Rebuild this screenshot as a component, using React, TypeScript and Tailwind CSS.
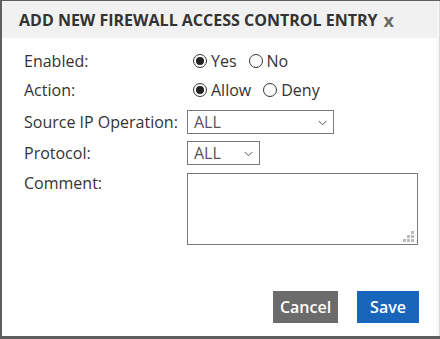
import { useState } from 'react'

function Radio({ checked, label, onClick }: { checked: boolean; label: string; onClick: () => void }) {
  return (
    <label className="flex cursor-pointer items-center" onClick={onClick}>
      <span className="flex h-[14px] w-[14px] items-center justify-center rounded-full border border-[#333] bg-white">
        {checked && <span className="h-[8px] w-[8px] rounded-full bg-[#222]" />}
      </span>
      <span className="ml-[4px]">{label}</span>
    </label>
  )
}

function Select({ width, value }: { width: string; value: string }) {
  return (
    <div className={`flex h-6 items-center justify-between border border-[#7a7a7a] bg-white pl-[6px] pr-[6px] ${width}`}>
      <span className="text-[#555]">{value}</span>
      <svg width="9" height="6" viewBox="0 0 9 6" className="mt-[1px]">
        <path d="M0.5 0.8 L4.5 4.8 L8.5 0.8" fill="none" stroke="#555" strokeWidth="1" />
      </svg>
    </div>
  )
}

export default function App() {
  const [enabled, setEnabled] = useState(true)
  const [allow, setAllow] = useState(true)

  return (
    <div
      className="flex h-[339px] w-[440px] flex-col bg-[#5e5e5e] pb-[3px] pl-[2px] pt-[1px]"
      style={{ fontFamily: '"Open Sans", sans-serif' }}
    >
      <div className="flex flex-1 border-r border-[#dcdcdc] bg-[#f6f6f6] pr-[2px]">
        <div className="flex flex-1 flex-col bg-white">
          <div className="flex h-[37px] items-center justify-between bg-[#f1f1f1] pl-[17px] pr-[43px]">
            <h1 className="text-[16px] font-bold text-[#333]">ADD NEW FIREWALL ACCESS CONTROL ENTRY</h1>
            <button className="text-[18px] font-bold leading-none text-[#6a6a6a]">x</button>
          </div>

          <div className="flex flex-1 flex-col pl-[22px] pr-[18px] pt-[11px] text-[16px] text-[#333]">
            <div className="flex h-6 items-center">
              <span className="w-[169px]">Enabled:</span>
              <div className="flex items-center gap-[12px]">
                <Radio checked={enabled} label="Yes" onClick={() => setEnabled(true)} />
                <Radio checked={!enabled} label="No" onClick={() => setEnabled(false)} />
              </div>
            </div>

            <div className="mt-[5px] flex h-6 items-center">
              <span className="w-[169px]">Action:</span>
              <div className="flex items-center gap-[12px]">
                <Radio checked={allow} label="Allow" onClick={() => setAllow(true)} />
                <Radio checked={!allow} label="Deny" onClick={() => setAllow(false)} />
              </div>
            </div>

            <div className="mt-[8px] flex h-6 items-center">
              <span className="w-[163px]">Source IP Operation:</span>
              <Select width="w-[147px]" value="ALL" />
            </div>

            <div className="mt-[7px] flex h-6 items-center">
              <span className="w-[163px]">Protocol:</span>
              <Select width="w-[73px]" value="ALL" />
            </div>

            <div className="mt-[8px] flex items-start">
              <span className="w-[163px] leading-[20px]">Comment:</span>
              <div className="relative h-[72px] w-[231px] border border-[#7a7a7a] bg-white">
                <textarea className="h-full w-full resize-none bg-transparent p-1 outline-none" />
                <svg width="11" height="11" viewBox="0 0 11 11" className="absolute bottom-[2px] right-[3px]">
                  <rect x="8" y="0" width="3" height="3" fill="#bbb" />
                  <rect x="4" y="4" width="3" height="3" fill="#bbb" />
                  <rect x="8" y="4" width="3" height="3" fill="#bbb" />
                  <rect x="0" y="8" width="3" height="3" fill="#bbb" />
                  <rect x="4" y="8" width="3" height="3" fill="#bbb" />
                  <rect x="8" y="8" width="3" height="3" fill="#bbb" />
                </svg>
              </div>
            </div>

            <div className="mt-[46px] flex justify-end gap-[19px]">
              <button className="h-8 w-[65px] bg-[#6b6b6b] text-[16px] font-semibold text-white">Cancel</button>
              <button className="h-8 w-[62px] bg-[#1766bb] text-[16px] font-semibold text-white">Save</button>
            </div>
          </div>
        </div>
      </div>
    </div>
  )
}
